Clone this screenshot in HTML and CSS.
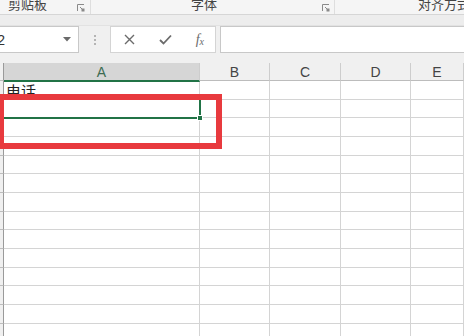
FILE: index.html
```html
<!DOCTYPE html>
<html lang="zh-CN">
<head>
    <meta charset="UTF-8">
    <title>表格</title>
    <link rel="stylesheet" href="styles.css">
</head>
<body>
    <div class="ribbon">
        <div class="group group-clip">
            <span class="group-label">剪贴板</span>
            <svg class="launcher" width="8" height="8" viewBox="0 0 8 8"><path d="M0.5 7V0.5H7" fill="none" stroke="#8a8a8a"/><path d="M3 3L6.5 6.5" stroke="#8a8a8a"/><rect x="4.5" y="4.5" width="3" height="3" fill="#8a8a8a"/></svg>
        </div>
        <div class="group group-font">
            <span class="group-label">字体</span>
            <svg class="launcher" width="8" height="8" viewBox="0 0 8 8"><path d="M0.5 7V0.5H7" fill="none" stroke="#8a8a8a"/><path d="M3 3L6.5 6.5" stroke="#8a8a8a"/><rect x="4.5" y="4.5" width="3" height="3" fill="#8a8a8a"/></svg>
        </div>
        <div class="group group-align">
            <span class="group-label">对齐方式</span>
        </div>
    </div>
    <div class="band"></div>

    <div class="formula-bar">
        <div class="namebox">
            <span class="namebox-text">A2</span>
            <svg class="namebox-arrow" width="8" height="5" viewBox="0 0 8 5"><path d="M0 0H8L4 4.5Z" fill="#6a6a6a"/></svg>
        </div>
        <div class="grip">
            <i></i><i></i><i></i>
        </div>
        <div class="fx-buttons">
            <svg width="11" height="11" viewBox="0 0 11 11"><path d="M1 1L10 10M10 1L1 10" stroke="#6b6b6b" stroke-width="1.4"/></svg>
            <svg width="13" height="11" viewBox="0 0 13 11"><path d="M1 6L4.5 9.5L12 1.5" fill="none" stroke="#6b6b6b" stroke-width="1.8"/></svg>
            <span class="fx">f<sub>x</sub></span>
        </div>
        <div class="formula-input"></div>
    </div>

    <div class="sheet">
        <div class="corner"></div>
        <div class="col-head selected">A</div>
        <div class="col-head">B</div>
        <div class="col-head">C</div>
        <div class="col-head">D</div>
        <div class="col-head">E</div>

        <div class="row-head"></div><div class="cell text">电话</div><div class="cell"></div><div class="cell"></div><div class="cell"></div><div class="cell"></div>
        <div class="row-head"></div><div class="cell active"></div><div class="cell"></div><div class="cell"></div><div class="cell"></div><div class="cell"></div>
        <div class="row-head"></div><div class="cell"></div><div class="cell"></div><div class="cell"></div><div class="cell"></div><div class="cell"></div>
        <div class="row-head"></div><div class="cell"></div><div class="cell"></div><div class="cell"></div><div class="cell"></div><div class="cell"></div>
        <div class="row-head"></div><div class="cell"></div><div class="cell"></div><div class="cell"></div><div class="cell"></div><div class="cell"></div>
        <div class="row-head"></div><div class="cell"></div><div class="cell"></div><div class="cell"></div><div class="cell"></div><div class="cell"></div>
        <div class="row-head"></div><div class="cell"></div><div class="cell"></div><div class="cell"></div><div class="cell"></div><div class="cell"></div>
        <div class="row-head"></div><div class="cell"></div><div class="cell"></div><div class="cell"></div><div class="cell"></div><div class="cell"></div>
        <div class="row-head"></div><div class="cell"></div><div class="cell"></div><div class="cell"></div><div class="cell"></div><div class="cell"></div>
        <div class="row-head"></div><div class="cell"></div><div class="cell"></div><div class="cell"></div><div class="cell"></div><div class="cell"></div>
        <div class="row-head"></div><div class="cell"></div><div class="cell"></div><div class="cell"></div><div class="cell"></div><div class="cell"></div>
        <div class="row-head"></div><div class="cell"></div><div class="cell"></div><div class="cell"></div><div class="cell"></div><div class="cell"></div>
        <div class="row-head"></div><div class="cell"></div><div class="cell"></div><div class="cell"></div><div class="cell"></div><div class="cell"></div>
        <div class="row-head"></div><div class="cell"></div><div class="cell"></div><div class="cell"></div><div class="cell"></div><div class="cell"></div>

        <!-- 红框标注 -->
        <div class="mark"></div>
    </div>
</body>
</html>
```

FILE: styles.css
```css
body {
    margin: 0;
    width: 464px;
    height: 336px;
    overflow: hidden;
    background: #f0f0f0;
    font-family: "Noto Sans CJK SC", "Liberation Sans", sans-serif;
    color: #333;
}

/* 功能区底部 */
.ribbon {
    display: flex;
    height: 14px;
    background: #f5f5f5;
    border-bottom: 1px solid #d6d6d6;
    overflow: hidden;
}
.group {
    position: relative;
    display: flex;
    flex-shrink: 0;
    border-right: 1px solid #dedede;
}
.group-label {
    flex-shrink: 0;
    font-size: 13px;
    line-height: 13px;
    margin-top: -3px;
    color: #444;
    white-space: nowrap;
}
.group-clip {
    width: 90px;
}
.group-clip .group-label {
    margin-left: 8px;
}
.group-font {
    width: 243px;
}
.group-font .group-label {
    margin-left: 100px;
}
.launcher {
    position: absolute;
    right: 5px;
    top: 4px;
}
.group-font .launcher {
    right: 4px;
}
.group-align {
    flex: 1;
    min-width: 0;
    overflow: hidden;
    border-right: none;
}
.group-align .group-label {
    margin-left: 83px;
}
.band {
    height: 10px;
    background: #ededed;
    border-bottom: 1px solid #e2e2e2;
}

/* 编辑栏 */
.formula-bar {
    display: flex;
    align-items: stretch;
    height: 27px;
    margin-bottom: 10px;
}
.namebox {
    display: flex;
    align-items: center;
    justify-content: space-between;
    flex-shrink: 0;
    width: 104px;
    margin-left: -25px;
    background: #fff;
    border: 1px solid #c8c8c8;
    padding: 0 7px 0 12px;
    box-sizing: border-box;
}
.namebox-text {
    font-family: "Liberation Sans", sans-serif;
    font-size: 14px;
    color: #333;
}
.grip {
    display: flex;
    flex-direction: column;
    justify-content: center;
    flex-shrink: 0;
    gap: 2px;
    width: 31px;
    align-items: center;
}
.grip i {
    width: 2px;
    height: 2px;
    background: #b4b4b4;
}
.fx-buttons {
    display: flex;
    align-items: center;
    justify-content: space-between;
    flex-shrink: 0;
    width: 106px;
    padding: 0 11px 0 13px;
    box-sizing: border-box;
    background: #fff;
    border: 1px solid #d4d4d4;
}
.fx {
    font-family: "Liberation Serif", serif;
    font-style: italic;
    font-size: 14px;
    color: #6b6b6b;
}
.fx sub {
    font-size: 10px;
    vertical-align: -1px;
}
.formula-input {
    flex: 1;
    margin-left: 4px;
    margin-right: -4px;
    background: #fff;
    border: 1px solid #c8c8c8;
}

/* 表格 */
.sheet {
    position: relative;
    display: grid;
    grid-template-columns: 4px 196px 70px 71px 70px 1fr;
    grid-template-rows: 18px;
    grid-auto-rows: 18.67px;
    background: #fff;
}
.corner, .row-head {
    background: #f0f0f0;
    border-right: 1px solid #9a9a9a;
    border-bottom: 1px solid #bdbdbd;
}
.col-head {
    display: flex;
    align-items: center;
    justify-content: center;
    background: #f0f0f0;
    border-right: 1px solid #cdcdcd;
    border-bottom: 1px solid #bcbcbc;
    font-family: "Liberation Sans", sans-serif;
    font-size: 14px;
    color: #444;
}
.col-head.selected {
    background: #d6d6d6;
    color: #3d6b52;
    border-bottom: 2px solid #217346;
    margin-bottom: -1px;
    position: relative;
}
.cell {
    border-right: 1px solid #d4d4d4;
    border-bottom: 1px solid #d4d4d4;
}
.text {
    padding: 2px 0 0 2px;
    font-size: 15px;
    line-height: 16px;
    color: #222;
}
.active {
    position: relative;
    border-right: 2px solid #217346;
    border-bottom: 2px solid #217346;
    margin-right: -1px;
    margin-bottom: -1px;
    z-index: 1;
}
.active::after {
    content: "";
    position: absolute;
    right: -4px;
    bottom: -4px;
    width: 4px;
    height: 4px;
    background: #217346;
    border: 1px solid #fff;
}
.mark {
    position: absolute;
    left: -2px;
    top: 31px;
    width: 224px;
    height: 55px;
    box-sizing: border-box;
    border: 6px solid #e83a3e;
    z-index: 2;
}
```
